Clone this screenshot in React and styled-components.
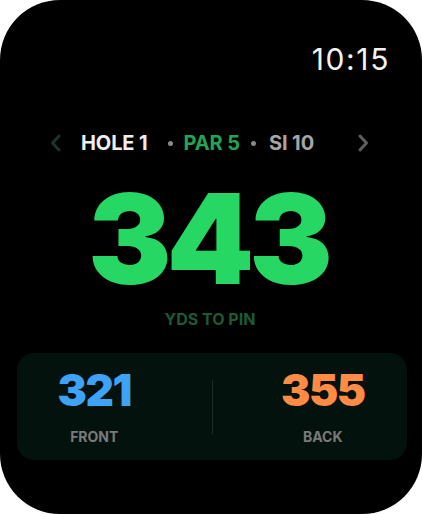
import React from "react";
import styled, { createGlobalStyle } from "styled-components";

const Global = createGlobalStyle`
  html, body { margin: 0; padding: 0; background: #ffffff; }
  body { font-family: Inter, "Liberation Sans", sans-serif; }
`;

const Watch = styled.div`
  width: 422px;
  height: 514px;
  background: #000;
  border-radius: 60px;
  box-sizing: border-box;
  padding: 44px 17px 0 15px;
  display: flex;
  flex-direction: column;
  overflow: hidden;
`;

const StatusBar = styled.div`
  display: flex;
  justify-content: flex-end;
  padding-right: 15px;
`;

const Time = styled.span`
  font-family: Inter, sans-serif;
  font-weight: 400;
  font-size: 30px;
  line-height: 30px;
  color: #f2f2f2;
  letter-spacing: 1.6px;
`;

const HoleBar = styled.div`
  margin-top: 57px;
  display: flex;
  align-items: center;
  height: 24px;
  padding-left: 32px;
`;

const Chevron = styled.svg`
  width: 16px;
  height: 20px;
  flex: none;
`;

const HoleText = styled.span`
  font-weight: 700;
  font-size: 20px;
  line-height: 24px;
  color: ${(p) => p.$color};
  letter-spacing: -0.1px;
  white-space: nowrap;
`;

const Dot = styled.span`
  width: 5px;
  height: 5px;
  border-radius: 50%;
  background: #8a8a8a;
  flex: none;
  margin: 0 ${(p) => p.$right}px 0 ${(p) => p.$left}px;
`;

const Spacer = styled.span`
  width: ${(p) => p.$w}px;
  flex: none;
`;

const Big = styled.div`
  margin-top: 29px;
  text-align: center;
  font-weight: 900;
  font-size: 125px;
  line-height: 110px;
  color: #27d764;
  letter-spacing: -5px;
  padding-right: 4px;
`;

const Label = styled.div`
  margin-top: 15px;
  text-align: center;
  font-weight: 700;
  font-size: 16px;
  line-height: 20px;
  color: #1b5a35;
`;

const Card = styled.div`
  margin-top: 24px;
  margin-left: 2px;
  width: 390px;
  height: 107px;
  box-sizing: border-box;
  background: #04120d;
  border-radius: 17px;
  display: grid;
  grid-template-columns: 1fr 1px 1fr;
  align-items: center;
`;

const Divider = styled.div`
  width: 1px;
  height: 54px;
  background: #1f2b26;
`;

const Side = styled.div`
  display: flex;
  flex-direction: column;
  align-items: center;
  transform: translateX(${(p) => p.$shift}px);
`;

const Yard = styled.div`
  font-weight: 900;
  font-size: 44px;
  line-height: 44px;
  color: ${(p) => p.$color};
  letter-spacing: -1.5px;
`;

const SideLabel = styled.div`
  margin-top: 17px;
  font-weight: 700;
  font-size: 14px;
  line-height: 16px;
  color: #7a7a7a;
`;

const ChevLeft = () => (
  <Chevron viewBox="0 0 16 20">
    <path d="M12 3 L5.5 10 L12 17" fill="none" stroke="#17372a" strokeWidth="3" strokeLinecap="round" strokeLinejoin="round" />
  </Chevron>
);

const ChevRight = () => (
  <Chevron viewBox="0 0 16 20">
    <path d="M4 3 L10.5 10 L4 17" fill="none" stroke="#5e5e5e" strokeWidth="3" strokeLinecap="round" strokeLinejoin="round" />
  </Chevron>
);

export default function App() {
  return (
    <>
      <Global />
      <Watch>
        <StatusBar>
          <Time>10:15</Time>
        </StatusBar>
        <HoleBar>
          <ChevLeft />
          <Spacer $w={18} />
          <HoleText $color="#eeeeee">HOLE 1</HoleText>
          <Dot $left={20} $right={11} />
          <HoleText $color="#22a452">PAR 5</HoleText>
          <Dot $left={11} $right={13} />
          <HoleText $color="#a6a6a6">SI 10</HoleText>
          <Spacer $w={42} />
          <ChevRight />
        </HoleBar>
        <Big>343</Big>
        <Label>YDS TO PIN</Label>
        <Card>
          <Side $shift={-20}>
            <Yard $color="#3ea2f6">321</Yard>
            <SideLabel>FRONT</SideLabel>
          </Side>
          <Divider />
          <Side $shift={13}>
            <Yard $color="#ff8b45">355</Yard>
            <SideLabel>BACK</SideLabel>
          </Side>
        </Card>
      </Watch>
    </>
  );
}
